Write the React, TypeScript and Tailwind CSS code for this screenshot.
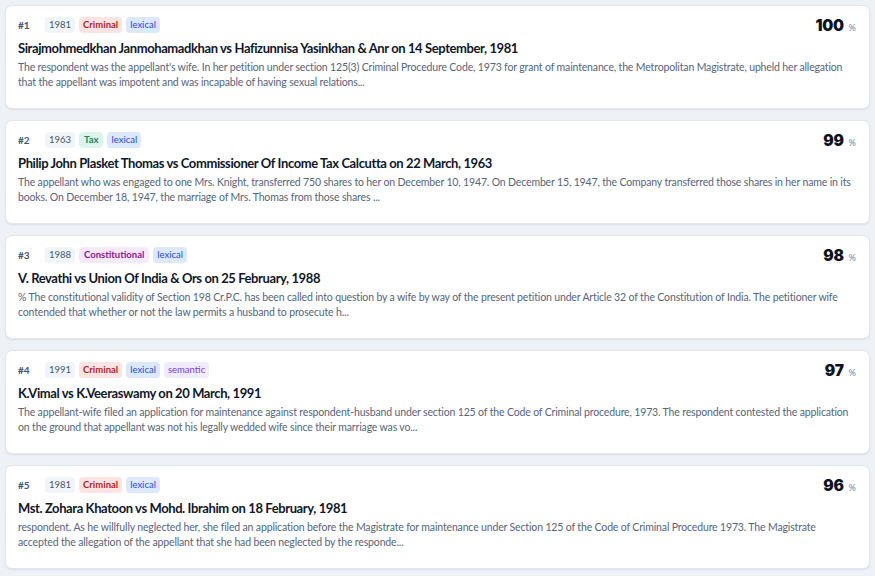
import React from "react";

type Tone = "year" | "criminal" | "tax" | "constitutional" | "lexical" | "semantic";
type Tag = { label: string; tone: Tone };

type Result = {
  rank: number;
  tags: Tag[];
  title: string;
  snippet: string;
  score: number;
};

const toneClass: Record<Tone, string> = {
  year: "bg-[#f1f5f9] text-[#475569] font-normal px-[4px]",
  criminal: "bg-[#fde4e4] text-[#b91c1c] font-bold px-[4px]",
  tax: "bg-[#dcf5ec] text-[#0f8a6a] font-bold px-[5px]",
  constitutional: "bg-[#f8e8fb] text-[#86198f] font-bold px-[5px]",
  lexical: "bg-[#dbe8fe] text-[#1d4ed8] font-normal px-[4px]",
  semantic: "bg-[#f1ebfe] text-[#7c3aed] font-normal px-[4px]",
};

const results: Result[] = [
  {
    rank: 1,
    tags: [
      { label: "1981", tone: "year" },
      { label: "Criminal", tone: "criminal" },
      { label: "lexical", tone: "lexical" },
    ],
    title: "Sirajmohmedkhan Janmohamadkhan vs Hafizunnisa Yasinkhan & Anr on 14 September, 1981",
    snippet:
      "The respondent was the appellant's wife. In her petition under section 125(3) Criminal Procedure Code, 1973 for grant of maintenance, the Metropolitan Magistrate, upheld her allegation that the appellant was impotent and was incapable of having sexual relations...",
    score: 100,
  },
  {
    rank: 2,
    tags: [
      { label: "1963", tone: "year" },
      { label: "Tax", tone: "tax" },
      { label: "lexical", tone: "lexical" },
    ],
    title: "Philip John Plasket Thomas vs Commissioner Of Income Tax Calcutta on 22 March, 1963",
    snippet:
      "The appellant who was engaged to one Mrs. Knight, transferred 750 shares to her on December 10, 1947. On December 15, 1947, the Company transferred those shares in her name in its books. On December 18, 1947, the marriage of Mrs. Thomas from those shares ...",
    score: 99,
  },
  {
    rank: 3,
    tags: [
      { label: "1988", tone: "year" },
      { label: "Constitutional", tone: "constitutional" },
      { label: "lexical", tone: "lexical" },
    ],
    title: "V. Revathi vs Union Of India & Ors on 25 February, 1988",
    snippet:
      "% The constitutional validity of Section 198 Cr.P.C. has been called into question by a wife by way of the present petition under Article 32 of the Constitution of India. The petitioner wife contended that whether or not the law permits a husband to prosecute h...",
    score: 98,
  },
  {
    rank: 4,
    tags: [
      { label: "1991", tone: "year" },
      { label: "Criminal", tone: "criminal" },
      { label: "lexical", tone: "lexical" },
      { label: "semantic", tone: "semantic" },
    ],
    title: "K.Vimal vs K.Veeraswamy on 20 March, 1991",
    snippet:
      "The appellant-wife filed an application for maintenance against respondent-husband under section 125 of the Code of Criminal procedure, 1973. The respondent contested the application on the ground that appellant was not his legally wedded wife since their marriage was vo...",
    score: 97,
  },
  {
    rank: 5,
    tags: [
      { label: "1981", tone: "year" },
      { label: "Criminal", tone: "criminal" },
      { label: "lexical", tone: "lexical" },
    ],
    title: "Mst. Zohara Khatoon vs Mohd. Ibrahim on 18 February, 1981",
    snippet:
      "respondent. As he willfully neglected her, she filed an application before the Magistrate for maintenance under Section 125 of the Code of Criminal Procedure 1973. The Magistrate accepted the allegation of the appellant that she had been neglected by the responde...",
    score: 96,
  },
];

function ResultCard({ r }: { r: Result }) {
  return (
    <div className="h-[104px] rounded-[7px] border border-[#e2e6ee] bg-white pl-[12px] pr-[13px] pt-[11px] shadow-[0_1px_2px_rgba(15,23,42,0.08)]">
      <div className="flex items-start justify-between">
        <div className="flex h-[16px] items-center">
          <span className="w-[27px] text-[10px] font-bold text-[#475569]">#{r.rank}</span>
          <div className="flex items-center gap-[4px]">
            {r.tags.map((t, i) => (
              <span
                key={i}
                className={`rounded-[4px] text-[9.5px] leading-[16px] ${toneClass[t.tone]}`}
              >
                {t.label}
              </span>
            ))}
          </div>
        </div>
        <div className="mt-[1px] flex items-baseline gap-[5px]">
          <span className="font-['Inter'] text-[15.5px] font-black leading-[16px] tracking-[-0.3px] text-[#0b1220]">
            {r.score}
          </span>
          <span className="text-[9px] font-bold leading-[16px] text-[#94a3b8]">%</span>
        </div>
      </div>
      <div className="mt-[3px] text-[13px] font-bold leading-[18px] tracking-[-0.4px] text-[#0f172a]">
        {r.title}
      </div>
      <p className="mt-[3px] text-[10.5px] leading-[15px] tracking-[-0.15px] text-[#56657b]">{r.snippet}</p>
    </div>
  );
}

export default function App() {
  return (
    <div
      className="min-h-[576px] w-[875px] bg-[#eef1f6] px-[5px] pt-[5px]"
      style={{ fontFamily: 'Lato, "Noto Sans", sans-serif' }}
    >
      <div className="flex flex-col gap-[11px]">
        {results.map((r) => (
          <ResultCard key={r.rank} r={r} />
        ))}
      </div>
    </div>
  );
}
